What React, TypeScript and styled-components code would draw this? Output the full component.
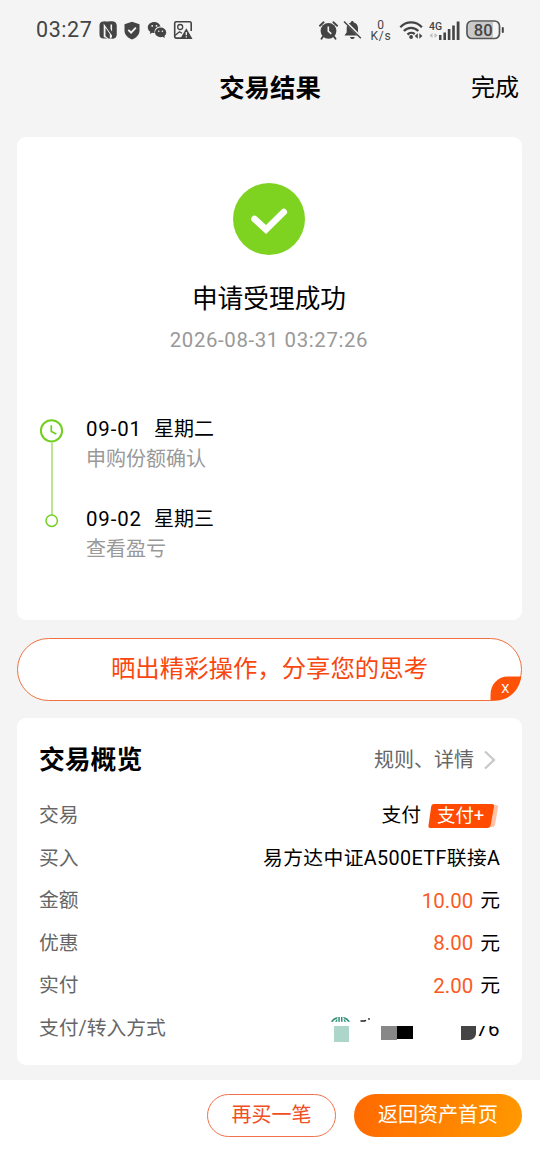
import React from "react";
import styled, { createGlobalStyle } from "styled-components";

const GlobalStyle = createGlobalStyle`
  * { box-sizing: border-box; }
  body {
    margin: 0;
    background: #f4f4f4;
    font-family: Roboto, "Noto Sans CJK SC", sans-serif;
    color: #000;
  }
`;

const Screen = styled.div`
  width: 540px;
  height: 1170px;
  display: flex;
  flex-direction: column;
  background: #f4f4f4;
  overflow: hidden;
`;

const StatusBar = styled.div`
  height: 60px;
  flex: none;
  display: flex;
  align-items: center;
  justify-content: space-between;
  padding: 0 35px 0 36px;
  color: #444;
`;

const StatusGroup = styled.div<{ $gap: number }>`
  display: flex;
  align-items: center;
  gap: ${(p) => p.$gap}px;
  svg { display: block; flex: none; }
`;

const Clock = styled.span`
  font-size: 21.5px;
  line-height: 24px;
  letter-spacing: 0.55px;
  margin-right: 1px;
`;

const NetSpeed = styled.span`
  display: flex;
  flex-direction: column;
  align-items: center;
  font-size: 12px;
  line-height: 11px;
  letter-spacing: 0.8px;
  width: 26px;
  padding-top: 1px;
`;

const Header = styled.header`
  height: 55px;
  flex: none;
  display: grid;
  grid-template-columns: 1fr auto 1fr;
  align-items: center;
  padding: 0 21px;
`;

const Title = styled.h1`
  margin: 0;
  grid-column: 2;
  font-size: 25.4px;
  line-height: 36px;
  font-weight: 700;
`;

const DoneLink = styled.span`
  justify-self: end;
  font-size: 24px;
  line-height: 36px;
  padding-top: 1px;
`;

const Content = styled.main`
  flex: 1;
  display: flex;
  flex-direction: column;
  padding: 22px 18px 0 17px;
`;

const ResultCard = styled.section`
  height: 483px;
  flex: none;
  background: #fff;
  border-radius: 9px;
  display: flex;
  flex-direction: column;
  align-items: center;
  padding-top: 45.500px;
  padding-right: 1px;
`;

const ResultText = styled.div`
  margin-top: 25px;
  font-size: 25.7px;
  line-height: 38px;
`;

const ResultTime = styled.div`
  margin-top: 10px;
  font-size: 20.4px;
  line-height: 24px;
  letter-spacing: 0.62px;
  color: #999;
`;

const Timeline = styled.div`
  align-self: stretch;
  margin-top: 62px;
  padding-left: 22px;
  display: flex;
  gap: 22px;
`;

const TimelineSteps = styled.div`
  display: flex;
  flex-direction: column;
  gap: 30px;
`;

const Step = styled.div`
  font-size: 20px;
  line-height: 30px;
  white-space: pre;
`;

const StepDate = styled.div`
  display: flex;
  gap: 11px;
`;

const DateDigits = styled.span`
  width: 57px;
  font-size: 20.4px;
  letter-spacing: 0.9px;
`;

const StepNote = styled.div`
  color: #999;
`;

const ShareBanner = styled.div`
  position: relative;
  margin-top: 18px;
  height: 63px;
  flex: none;
  border: 1px solid #f2703f;
  border-radius: 32px;
  background: #fff;
  color: #f9470f;
  font-size: 24.4px;
  line-height: 60px;
  text-align: center;
`;

const CloseCorner = styled.div`
  position: absolute;
  right: -1px;
  bottom: -1px;
  width: 32px;
  height: 25px;
  svg { display: block; }
`;

const OverviewCard = styled.section`
  margin-top: 17px;
  height: 347px;
  flex: none;
  background: #fff;
  border-radius: 9px;
  padding: 20px 22px 0;
`;

const OverviewHead = styled.div`
  display: flex;
  justify-content: space-between;
  align-items: center;
  height: 44px;
  margin-bottom: 13px;
`;

const OverviewTitle = styled.h2`
  margin: 0;
  font-size: 25.8px;
  font-weight: 700;
  line-height: 38px;
`;

const RulesLink = styled.span`
  display: flex;
  align-items: center;
  gap: 9px;
  font-size: 20px;
  line-height: 30px;
  color: #666;
  padding-right: 4px;
`;

const Row = styled.div`
  display: flex;
  justify-content: space-between;
  align-items: center;
  height: 42.5px;
  font-size: 19.8px;
  line-height: 30px;
`;

const RowLabel = styled.span`
  color: #666;
`;

const RowValue = styled.span`
  display: flex;
  align-items: center;
  gap: 7px;
`;

const FundName = styled.span`
  letter-spacing: 0.37px;
  margin-right: -0.4px;
`;

const Amount = styled.span`
  color: #fb5a24;
  font-size: 20.5px;
  line-height: 28px;
  padding-bottom: 1px;
`;

const PayTag = styled.span`
  position: relative;
  display: block;
  width: 71px;
  height: 24px;
  margin: -1px 1px 0 0;
  svg { display: block; }
`;

const PayTagText = styled.span`
  position: absolute;
  left: 9px;
  top: 0;
  font-size: 18.4px;
  line-height: 24px;
  color: #fff;
`;

const MaskedAccount = styled.span`
  display: flex;
  align-items: flex-start;
  height: 25px;
  margin-top: 2px;
  svg { display: block; }
`;

const MaskedDigits = styled.span`
  height: 14px;
  margin-top: 9px;
  overflow: hidden;
  display: flex;
  align-items: flex-end;
  line-height: 22px;
  font-size: 20.5px;
  letter-spacing: 0.5px;
`;

const Footer = styled.footer`
  height: 90px;
  flex: none;
  background: #fff;
  display: flex;
  justify-content: flex-end;
  gap: 18px;
  padding: 14px 18px 0;
`;

const FooterButton = styled.button<{ $primary?: boolean }>`
  width: ${(p) => (p.$primary ? 168 : 129)}px;
  height: 43px;
  padding: 0 0 1px;
  border-radius: 22px;
  border: ${(p) => (p.$primary ? "none" : "1px solid #f2704c")};
  background: ${(p) => (p.$primary ? "linear-gradient(100deg, #ff6900, #ff9900)" : "#fff")};
  color: ${(p) => (p.$primary ? "#fff" : "#f04e23")};
  font-family: inherit;
  font-size: 20px;
  line-height: 30px;
`;

const NfcIcon = () => (
  <svg width="18" height="18" viewBox="0 0 18 18">
    <path d="M4.500.5H13q4 0 4.500 4v9q0 4-4 4H9.800l3.600-1.200V3.500h-1.900v8.300L5.200 2.500V.5Z" fill="#444" />
    <path d="M4.300.5Q.5.8.5 4.500v9q0 4 4 4h4L4.700 16V2.500L13 14.500v3h.5q4 0 4-4v-9q0-4-4-4H9.500l3.700 1.700v8.500L6 .5ZM6.500 6.800v8.300l2.800 2.400h1.500V13Z" fill="#444" fillRule="evenodd" />
  </svg>
);

const ShieldIcon = () => (
  <svg width="18" height="19" viewBox="0 0 18 19">
    <path d="M9 .7 16.500 3.300v6.200c0 4.200-3 7.100-7.500 9-4.500-1.900-7.500-4.800-7.500-9V3.300Z" fill="#444" />
    <path d="m5.300 8.800 2.800 2.800 4.800-4.900" fill="none" stroke="#f4f4f4" strokeWidth="1.900" />
  </svg>
);

const ChatIcon = () => (
  <svg width="20" height="18" viewBox="0 0 20 18">
    <path d="M7.300 1C3.600 1 .8 3.400.8 6.500c0 1.800 1 3.300 2.500 4.300l-.5 2.300 2.400-1.300c.9.300 1.500.3 2.400.3C7 8.200 9.800 5.600 13.600 5.600 12.900 2.900 10.400 1 7.300 1Z" fill="#444" />
    <ellipse cx="13.600" cy="11.400" rx="5.600" ry="4.900" fill="#444" />
    <path d="m15 15.500 2.800 1.600-.5-3Z" fill="#444" />
    <g fill="#f4f4f4">
      <circle cx="5.200" cy="4.900" r=".9" /><circle cx="9.500" cy="4.900" r=".9" />
      <circle cx="11.800" cy="10.300" r=".8" /><circle cx="15.400" cy="10.300" r=".8" />
    </g>
  </svg>
);

const ImageAlertIcon = () => (
  <svg width="20" height="20" viewBox="0 0 20 20">
    <path d="M8 18.100H3.200a1.500 1.500 0 0 1-1.500-1.500V3.200a1.500 1.500 0 0 1 1.500-1.500h13.500a1.500 1.500 0 0 1 1.500 1.500V11" fill="none" stroke="#444" strokeWidth="1.600" />
    <circle cx="7.200" cy="7" r="2.500" fill="none" stroke="#444" strokeWidth="1.300" />
    <path d="m2 15.500 4.500-3.800 2.500 1.500" fill="none" stroke="#444" strokeWidth="1.300" />
    <path d="m13.300 8.300 6.200 10.700H7.100Z" fill="#444" />
    <path d="M13.300 12v3.300m0 1v1.300" stroke="#f4f4f4" strokeWidth="1.300" />
  </svg>
);

const AlarmIcon = () => (
  <svg width="19" height="19" viewBox="0 0 19 19">
    <circle cx="9.500" cy="9.800" r="7.900" fill="#444" />
    <path d="M.9 4.700 4.600 1.300M18.100 4.700l-3.700-3.400M4 15.500l-1.500 2.300M15 15.500l1.500 2.300" stroke="#444" strokeWidth="1.900" strokeLinecap="round" />
    <path d="M9.300 5.500v4.700l3 2.600" fill="none" stroke="#f4f4f4" strokeWidth="1.600" />
  </svg>
);

const BellOffIcon = () => (
  <svg width="20" height="20" viewBox="0 0 20 20">
    <path d="M9.300.9c.9 0 1.500.6 1.500 1.500 2.700.7 4.200 2.800 4.200 5.600v4.200l2 3.300H1.500l2.200-3.300V8c0-2.800 1.400-4.900 4.100-5.600 0-.9.600-1.500 1.500-1.500Z" fill="#444" />
    <path d="M7 17h4.700c-.4 2.700-4.300 2.700-4.700 0Z" fill="#444" />
    <path d="m2.600 2 15.200 15.200" stroke="#f4f4f4" strokeWidth="2.800" />
    <path d="m1 1.500 16.800 16.800" stroke="#444" strokeWidth="1.400" />
  </svg>
);

const WifiIcon = () => (
  <svg width="25" height="20" viewBox="0 0 25 20">
    <g fill="none" stroke="#444" strokeWidth="2.300">
      <path d="M1.300 7.200c6-6.400 15.600-6.400 21.600 0" />
      <path d="M4.900 11c4-4.300 10.400-4.300 14.400 0" />
      <path d="M8.500 14.600c2-2.100 5.200-2.200 7.200-.5" />
    </g>
    <circle cx="12.100" cy="17" r="1.900" fill="#444" />
    <path d="m18.800 13.200v5.600l-3.100-2.800ZM20.300 13.200v5.600l3.100-2.800Z" fill="#444" />
  </svg>
);

const SignalIcon = () => (
  <svg width="32" height="21" viewBox="0 0 32 21">
    <text x="0" y="10" fontSize="11.500" fontWeight="500" fill="#444" fontFamily="Roboto" textLength="13" lengthAdjust="spacingAndGlyphs">4G</text>
    <path d="M3.500 13v5l-3-2.500ZM5.500 13v5l3-2.500Z" fill="#bbb" />
    <g fill="#444">
      <rect x="10" y="15" width="2.500" height="5" /><rect x="14.400" y="12.500" width="2.600" height="7.500" />
      <rect x="18.800" y="9" width="2.600" height="11" /><rect x="23.200" y="5.500" width="2.600" height="14.500" />
      <rect x="27.700" y="1.500" width="2.800" height="18.500" />
    </g>
  </svg>
);

const BatteryIcon = () => (
  <svg width="39" height="20" viewBox="0 0 39 20">
    <path d="M6 2h21v16H6a4 4 0 0 1-4-4V6a4 4 0 0 1 4-4Z" fill="#c9c9c9" />
    <rect x="1" y="1" width="32.500" height="17.500" rx="5" fill="none" stroke="#555" strokeWidth="1.700" />
    <rect x="35.800" y="7" width="2" height="6" rx="1" fill="#444" />
    <text x="17.200" y="15.600" fontSize="16.500" fontWeight="500" fill="#444" fontFamily="Roboto" textAnchor="middle">80</text>
  </svg>
);

const SuccessIcon = () => (
  <svg width="72" height="72" viewBox="0 0 72 72">
    <circle cx="36" cy="36" r="36" fill="#7ed321" />
    <path d="M21.500 36 33 46.500 50.800 29" fill="none" stroke="#fff" strokeWidth="6.500" strokeLinecap="round" />
  </svg>
);

const TimelineRail = () => (
  <svg width="25" height="116" viewBox="0 0 25 116">
    <path d="M13 29v72" stroke="#a4dd6c" strokeWidth="1.500" />
    <circle cx="12.500" cy="16.800" r="10.600" fill="#fff" stroke="#72cf22" strokeWidth="2" />
    <path d="M12.300 11.200v6.300l5 2.600" fill="none" stroke="#72cf22" strokeWidth="1.700" />
    <circle cx="12.700" cy="106.700" r="5.700" fill="#fff" stroke="#72cf22" strokeWidth="1.500" />
  </svg>
);

const BankMask = () => (
  <svg width="148" height="25" viewBox="0 0 148 25">
    <g fill="#2f9178">
      <path d="M2.800 4.800Q5 .8 10 0L8.500 2Q6 2.500 5 4.800ZM7 4.800 9.300 1.500v3.300ZM10.300 0h1.500v4.800h-1.500ZM13 0h1.500v4.800H13ZM15.500 1.500l3 3.300h-2.300ZM15 0q5 .8 7 4.800h-2Q18.800 2.500 16.500 2Z" />
    </g>
    <rect x="6" y="9" width="15" height="16" fill="#acd6ca" />
    <path d="M32.500 4h4l1.500-.7M40.200 1.800l1.600.4" fill="none" stroke="#222" strokeWidth="1.400" />
    <rect x="53" y="9" width="16" height="14" fill="#888" />
    <rect x="69" y="9" width="16" height="13" fill="#000" />
    <path d="M133 9h15v7c0 4-3 7-7 7h-8Z" fill="#444" />
  </svg>
);

const amounts = [
  { label: "金额", value: "10.00" },
  { label: "优惠", value: "8.00" },
  { label: "实付", value: "2.00" },
];

const steps = [
  { date: "09-01", day: "星期二", note: "申购份额确认" },
  { date: "09-02", day: "星期三", note: "查看盈亏" },
];

export default function App() {
  return (
    <>
      <GlobalStyle />
      <Screen>
        <StatusBar>
          <StatusGroup $gap={6}>
            <Clock>03:27</Clock>
            <NfcIcon />
            <ShieldIcon />
            <ChatIcon />
            <ImageAlertIcon />
          </StatusGroup>
          <StatusGroup $gap={5}>
            <AlarmIcon />
            <BellOffIcon />
            <NetSpeed><span>0</span><span>K/s</span></NetSpeed>
            <WifiIcon />
            <SignalIcon />
            <BatteryIcon />
          </StatusGroup>
        </StatusBar>
        <Header>
          <Title>交易结果</Title>
          <DoneLink>完成</DoneLink>
        </Header>
        <Content>
          <ResultCard>
            <SuccessIcon />
            <ResultText>申请受理成功</ResultText>
            <ResultTime>2026-08-31 03:27:26</ResultTime>
            <Timeline>
              <TimelineRail />
              <TimelineSteps>
                {steps.map((s) => (
                  <Step key={s.date}>
                    <StepDate><DateDigits>{s.date}</DateDigits><span>{s.day}</span></StepDate>
                    <StepNote>{s.note}</StepNote>
                  </Step>
                ))}
              </TimelineSteps>
            </Timeline>
          </ResultCard>
          <ShareBanner>
            晒出精彩操作，分享您的思考
            <CloseCorner>
              <svg width="32" height="25" viewBox="0 0 32 25">
                <path d="M.5 24.500V19C.5 8 8 .5 18 .5h13.300C29.500 14 19 24.500 6 24.500Z" fill="#ff5209" />
                <text x="15.300" y="17" fontSize="13" fill="#fff" fontFamily="Roboto" textAnchor="middle">X</text>
              </svg>
            </CloseCorner>
          </ShareBanner>
          <OverviewCard>
            <OverviewHead>
              <OverviewTitle>交易概览</OverviewTitle>
              <RulesLink>
                规则、详情
                <svg width="13" height="20" viewBox="0 0 13 20">
                  <path d="m2 1.500 9 8.500-9 8.500" fill="none" stroke="#c8c8c8" strokeWidth="2.200" />
                </svg>
              </RulesLink>
            </OverviewHead>
            <Row>
              <RowLabel>交易</RowLabel>
              <RowValue>
                支付
                <PayTag>
                  <svg width="71" height="24" viewBox="0 0 71 24">
                    <path d="M62 1h6q2.500 0 2 2.500L67 21q-.5 2-2.500 2H58Z" fill="#ffc4a8" />
                    <path d="M5.500 0H64q2.500 0 2 2.500L62.700 21q-.5 3-3.500 3H2.500Q0 24 .5 21.500L3.200 2.500Q3.500 0 5.500 0Z" fill="#ff4a00" />
                  </svg>
                  <PayTagText>支付+</PayTagText>
                </PayTag>
              </RowValue>
            </Row>
            <Row>
              <RowLabel>买入</RowLabel>
              <FundName>易方达中证A500ETF联接A</FundName>
            </Row>
            {amounts.map((a) => (
              <Row key={a.label}>
                <RowLabel>{a.label}</RowLabel>
                <RowValue><Amount>{a.value}</Amount>元</RowValue>
              </Row>
            ))}
            <Row>
              <RowLabel>支付/转入方式</RowLabel>
              <MaskedAccount>
                <BankMask />
                <MaskedDigits>76</MaskedDigits>
              </MaskedAccount>
            </Row>
          </OverviewCard>
        </Content>
        <Footer>
          <FooterButton>再买一笔</FooterButton>
          <FooterButton $primary>返回资产首页</FooterButton>
        </Footer>
      </Screen>
    </>
  );
}
